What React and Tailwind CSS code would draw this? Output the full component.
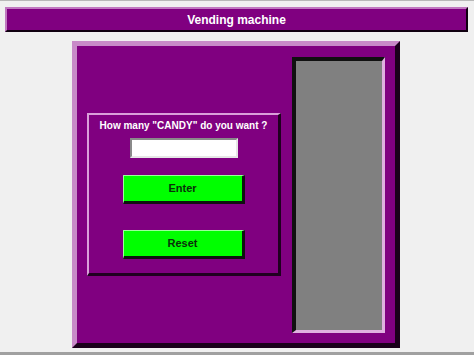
export default function App() {
  const font = { fontFamily: '"Liberation Sans", Arial, sans-serif' };

  return (
    <div className="w-[474px] h-[355px] overflow-hidden bg-[#f0f0f0] border-t border-t-[#b8b8b8] flex flex-col" style={font}>
      {/* Title bar */}
      <div className="mt-[6px] ml-[5px] mr-[6px] h-[25px] bg-[#800080] border-2 border-t-[#c078c0] border-l-[#c078c0] border-b-[#100010] border-r-[#100010] flex items-center justify-center">
        <span className="text-white font-bold text-[12px] leading-none">Vending machine</span>
      </div>

      {/* Machine body */}
      <div className="mt-[9px] ml-[72px] w-[328px] h-[307px] bg-[#800080] border-[5px] border-t-[#c88ac8] border-l-[#c88ac8] border-b-[#1a001a] border-r-[#1a001a] flex items-start pt-[11px] px-[10px] pb-[10px] gap-[11px]">
        {/* Order form */}
        <div className="mt-[56px] w-[194px] h-[163px] border-t-2 border-l-2 border-b-[3px] border-r-[3px] border-t-[#d9a0d9] border-l-[#d9a0d9] border-b-[#200020] border-r-[#200020] flex flex-col items-center pt-[4px]">
          <p className="text-white font-bold text-[10px] leading-[14px]">How many "CANDY" do you want ?</p>
          <input
            type="text"
            className="mt-[5px] w-[108px] h-[20px] bg-white border-2 border-t-[#8a8a8a] border-l-[#8a8a8a] border-b-[#e6e6e6] border-r-[#e6e6e6] outline-none"
          />
          <button className="mt-[17px] w-[122px] h-[29px] bg-[#00ff00] border-t border-l border-b-[3px] border-r-[3px] border-t-[#9cff9c] border-l-[#9cff9c] border-b-[#101010] border-r-[#101010] text-[#0a300a] font-bold text-[11px]">
            Enter
          </button>
          <button className="mt-[26px] w-[122px] h-[29px] bg-[#00ff00] border-t border-l border-b-[3px] border-r-[3px] border-t-[#9cff9c] border-l-[#9cff9c] border-b-[#101010] border-r-[#101010] text-[#0a300a] font-bold text-[11px]">
            Reset
          </button>
        </div>

        {/* Product display */}
        <div className="w-[93px] h-[276px] bg-[#808080] border-t-4 border-l-4 border-b-[3px] border-r-[3px] border-t-[#101010] border-l-[#101010] border-b-[#e0b0e0] border-r-[#e0b0e0]" />
      </div>

      <div className="mt-[4px] h-[3px] bg-[#a0a0a0]" />
    </div>
  );
}
